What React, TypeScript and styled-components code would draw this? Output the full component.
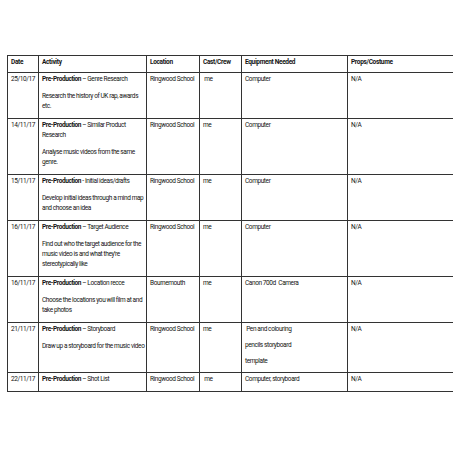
import React from "react";
import styled, { createGlobalStyle } from "styled-components";

const Global = createGlobalStyle`
  html, body { margin: 0; padding: 0; background: #ffffff; }
  body { width: 453px; height: 453px; overflow: hidden; }
`;

const Page = styled.div`
  width: 453px;
  height: 453px;
  overflow: hidden;
  padding: 55px 0 0 7px;
  box-sizing: border-box;
  font-family: "Roboto", "Liberation Sans", sans-serif;
  color: #141414;
`;

const Table = styled.table`
  border-collapse: collapse;
  table-layout: fixed;
  width: 449px;
`;

const Col = styled.col<{ $w: number }>`
  width: ${(p) => p.$w}px;
`;

const HeadCell = styled.th`
  border: 1px solid #333333;
  text-align: left;
  vertical-align: top;
  font-weight: 700;
  font-size: 6.5px;
  letter-spacing: -0.32px;
  line-height: 10px;
  padding: 1px 3px 5px 3px;
  white-space: nowrap;
  overflow: hidden;
`;

const Cell = styled.td`
  border: 1px solid #333333;
  vertical-align: top;
  font-size: 6.5px;
  letter-spacing: -0.4px;
  line-height: 10px;
  padding: 1px 3px 0 3px;
  white-space: nowrap;
  overflow: hidden;
`;

const Para = styled.div<{ $gap?: number }>`
  margin-bottom: ${(p) => (p.$gap ?? 7)}px;
`;

const Line = styled.div`
  white-space: pre;
`;

const Strong = styled.b`
  font-weight: 700;
`;

type Row = {
  date: string;
  title: string;
  sep: string;
  sub: string[];
  body: string[];
  location: string;
  cast: string;
  equip: string[];
  equipGap?: number;
};

const rows: Row[] = [
  {
    date: "25/10/17",
    title: "Genre Research",
    sep: " – ",
    sub: [],
    body: ["Research the history of UK rap, awards", "etc."],
    location: "Ringwood School",
    cast: " me",
    equip: ["Computer"],
  },
  {
    date: "14/11/17",
    title: "Similar Product",
    sep: " – ",
    sub: ["Research"],
    body: ["Analyse music videos from the same", "genre."],
    location: "Ringwood School",
    cast: "me",
    equip: ["Computer"],
  },
  {
    date: "15/11/17",
    title: "Initial ideas/drafts",
    sep: " - ",
    sub: [],
    body: ["Develop initial ideas through a mind map", "and choose an idea"],
    location: "Ringwood School",
    cast: "me",
    equip: ["Computer"],
  },
  {
    date: "16/11/17",
    title: "Target Audience",
    sep: " – ",
    sub: [],
    body: [
      "Find out who the target audience for the",
      "music video is and what they’re",
      "stereotypically like",
    ],
    location: "Ringwood School",
    cast: "me",
    equip: ["Computer"],
  },
  {
    date: "16/11/17",
    title: "Location recce",
    sep: " – ",
    sub: [],
    body: ["Choose the locations you will film at and", "take photos"],
    location: "Bournemouth",
    cast: "me",
    equip: ["Canon 700d  Camera"],
  },
  {
    date: "21/11/17",
    title: "Storyboard",
    sep: " – ",
    sub: [],
    body: ["Draw up a storyboard for the music video"],
    location: "Ringwood School",
    cast: "me",
    equip: [" Pen and colouring", "pencils storyboard", "template"],
    equipGap: 6,
  },
  {
    date: "22/11/17",
    title: "Shot List",
    sep: " – ",
    sub: [],
    body: [],
    location: "Ringwood School",
    cast: " me",
    equip: ["Computer, storyboard"],
  },
];

const widths = [31, 108, 53, 42, 106, 109];

export default function App() {
  return (
    <Page>
      <Global />
      <Table>
        <colgroup>
          {widths.map((w, i) => (
            <Col key={i} $w={w} />
          ))}
        </colgroup>
        <thead>
          <tr>
            <HeadCell>Date</HeadCell>
            <HeadCell>Activity</HeadCell>
            <HeadCell>Location</HeadCell>
            <HeadCell>Cast/Crew</HeadCell>
            <HeadCell>Equipment Needed</HeadCell>
            <HeadCell>Props/Costume</HeadCell>
          </tr>
        </thead>
        <tbody>
          {rows.map((r, i) => (
            <tr key={i}>
              <Cell>
                <Para>{r.date}</Para>
              </Cell>
              <Cell>
                <Para>
                  <Line>
                    <Strong>Pre-Production</Strong>
                    {r.sep}
                    {r.title}
                  </Line>
                  {r.sub.map((s, j) => (
                    <Line key={j}>{s}</Line>
                  ))}
                </Para>
                {r.body.length > 0 && (
                  <Para>
                    {r.body.map((s, j) => (
                      <Line key={j}>{s}</Line>
                    ))}
                  </Para>
                )}
              </Cell>
              <Cell>
                <Para>{r.location}</Para>
              </Cell>
              <Cell>
                <Para>
                  <Line>{r.cast}</Line>
                </Para>
              </Cell>
              <Cell>
                {r.equip.map((s, j) => (
                  <Para key={j} $gap={r.equipGap}>
                    <Line>{s}</Line>
                  </Para>
                ))}
              </Cell>
              <Cell>
                <Para>N/A</Para>
              </Cell>
            </tr>
          ))}
        </tbody>
      </Table>
    </Page>
  );
}
